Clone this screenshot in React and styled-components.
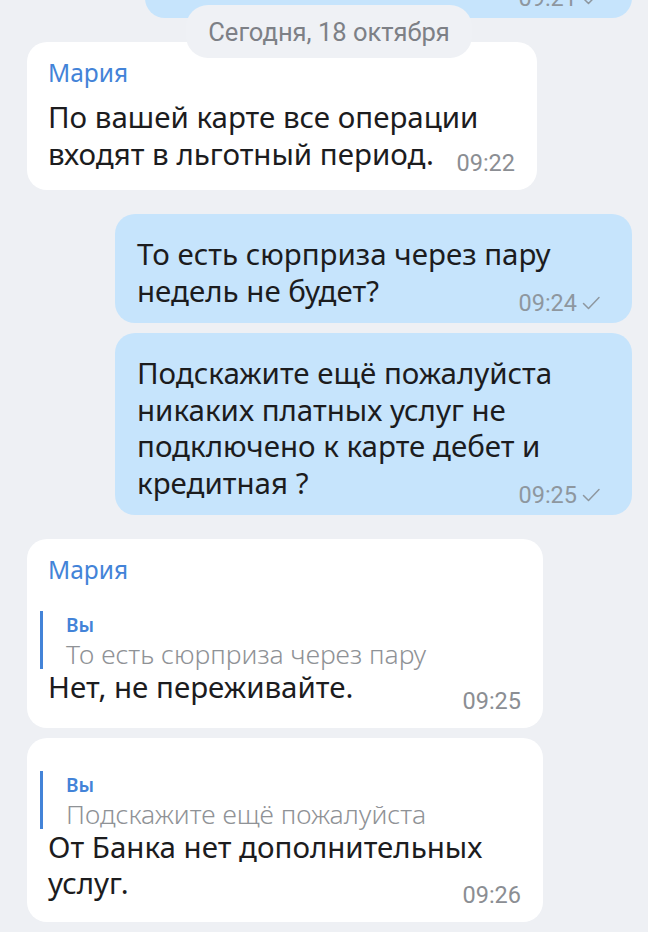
import React from 'react';
import styled, { createGlobalStyle } from 'styled-components';

const GlobalStyle = createGlobalStyle`
  html, body {
    margin: 0;
    padding: 0;
    background: #eef0f4;
  }
  body {
    font-family: "Noto Sans", "Open Sans", sans-serif;
    color: #1c1c1e;
    overflow: hidden;
  }
`;

const messages = [
  { id: 0, out: true, partial: true, time: '09:21' },
  {
    id: 1,
    author: 'Мария',
    width: 510,
    lines: ['По вашей карте все операции', 'входят в льготный период.'],
    time: '09:22',
    gap: 0,
  },
  {
    id: 2,
    out: true,
    lines: ['То есть сюрприза через пару', 'недель не будет?'],
    time: '09:24',
    gap: 24,
  },
  {
    id: 3,
    out: true,
    lines: [
      'Подскажите ещё пожалуйста',
      'никаких платных услуг не',
      'подключено к карте дебет и',
      'кредитная ?',
    ],
    time: '09:25',
    gap: 10,
  },
  {
    id: 4,
    author: 'Мария',
    width: 516,
    reply: 'То есть сюрприза через пару',
    lines: ['Нет, не переживайте.'],
    time: '09:25',
    gap: 24,
  },
  {
    id: 5,
    width: 516,
    reply: 'Подскажите ещё пожалуйста',
    lines: ['От Банка нет дополнительных', 'услуг.'],
    time: '09:26',
    gap: 10,
  },
];

function Check() {
  return (
    <svg width="20" height="18" viewBox="0 0 20 18" fill="none">
      <path d="M2.5 9.5 L7.5 14.5 L18 3.5" stroke="#8e979f" strokeWidth="1.5" strokeLinecap="round" strokeLinejoin="round" />
    </svg>
  );
}

// padding differs by what the bubble opens with
function bubblePadding(p) {
  if (p.$out) return '22px 22px 14px';
  if (p.$reply && !p.$author) return '33px 21px 20px';
  if (p.$reply) return '18px 21px 22px';
  return '18px 21px 18px';
}

function Message({ msg }) {
  return (
    <Bubble
      $out={msg.out}
      $width={msg.width}
      $gap={msg.gap}
      $partial={msg.partial}
      $author={!!msg.author}
      $reply={!!msg.reply}
    >
      {msg.author && <Author>{msg.author}</Author>}
      {msg.reply && (
        <Quote $afterAuthor={!!msg.author}>
          <QuoteName>Вы</QuoteName>
          <QuoteText>{msg.reply}</QuoteText>
        </Quote>
      )}
      {msg.lines && (
        <Body>
          {msg.lines.map((line) => (
            <Line key={line}>{line}</Line>
          ))}
        </Body>
      )}
      <Meta $out={msg.out}>
        {msg.time}
        {msg.out && <Check />}
      </Meta>
    </Bubble>
  );
}

function App() {
  return (
    <>
      <GlobalStyle />
      <Chat>
        <DatePill>Сегодня, 18 октября</DatePill>
        {messages.map((msg) => (
          <Message key={msg.id} msg={msg} />
        ))}
      </Chat>
    </>
  );
}

const Chat = styled.div`
  position: relative;
  display: flex;
  flex-direction: column;
  padding: 0 16px 0 27px;
  height: 932px;
  overflow: hidden;
`;

const DatePill = styled.div`
  position: absolute;
  top: 5px;
  left: 186px;
  width: 286px;
  height: 53px;
  border-radius: 22px;
  background: #eff1f5;
  display: flex;
  align-items: center;
  justify-content: center;
  font-family: Roboto, sans-serif;
  font-size: 25.5px;
  color: #7d8086;
  z-index: 2;
`;

const Bubble = styled.div`
  position: relative;
  box-sizing: border-box;
  align-self: ${(p) => (p.$out ? 'flex-end' : 'flex-start')};
  width: ${(p) => (p.$out ? (p.$partial ? 487 : 517) : p.$width)}px;
  margin-top: ${(p) => (p.$partial ? -42 : p.$gap)}px;
  ${(p) => p.$partial && 'height: 60px; margin-bottom: 24px;'}
  padding: ${bubblePadding};
  border-radius: 20px;
  background: ${(p) => (p.$out ? '#c6e4fc' : '#ffffff')};
`;

const Author = styled.div`
  font-size: 24.5px;
  line-height: 26px;
  color: #4383d8;
  margin-bottom: 13px;
`;

const Quote = styled.div`
  margin: ${(p) => (p.$afterAuthor ? 28 : 0)}px 0 0 -8px;
  padding-left: 23px;
  border-left: 3px solid #4383d8;
  display: flex;
  flex-direction: column;
`;

const QuoteName = styled.div`
  font-size: 19px;
  font-weight: 600;
  line-height: 28px;
  color: #4383d8;
`;

const QuoteText = styled.div`
  font-size: 26.5px;
  line-height: 30px;
  color: #8f9296;
  font-weight: 300;
  white-space: nowrap;
`;

const Body = styled.div`
  display: flex;
  flex-direction: column;
`;

const Line = styled.div`
  font-size: 29.5px;
  line-height: 36.5px;
  white-space: nowrap;
`;

const Meta = styled.div`
  position: absolute;
  right: ${(p) => (p.$out ? 31 : 22)}px;
  bottom: ${(p) => (p.$out ? 8 : 15)}px;
  display: flex;
  align-items: center;
  gap: 4px;
  font-family: Roboto, sans-serif;
  font-size: 23.5px;
  line-height: 24px;
  color: ${(p) => (p.$out ? '#8e979f' : '#8b8e93')};
`;

export default App;
